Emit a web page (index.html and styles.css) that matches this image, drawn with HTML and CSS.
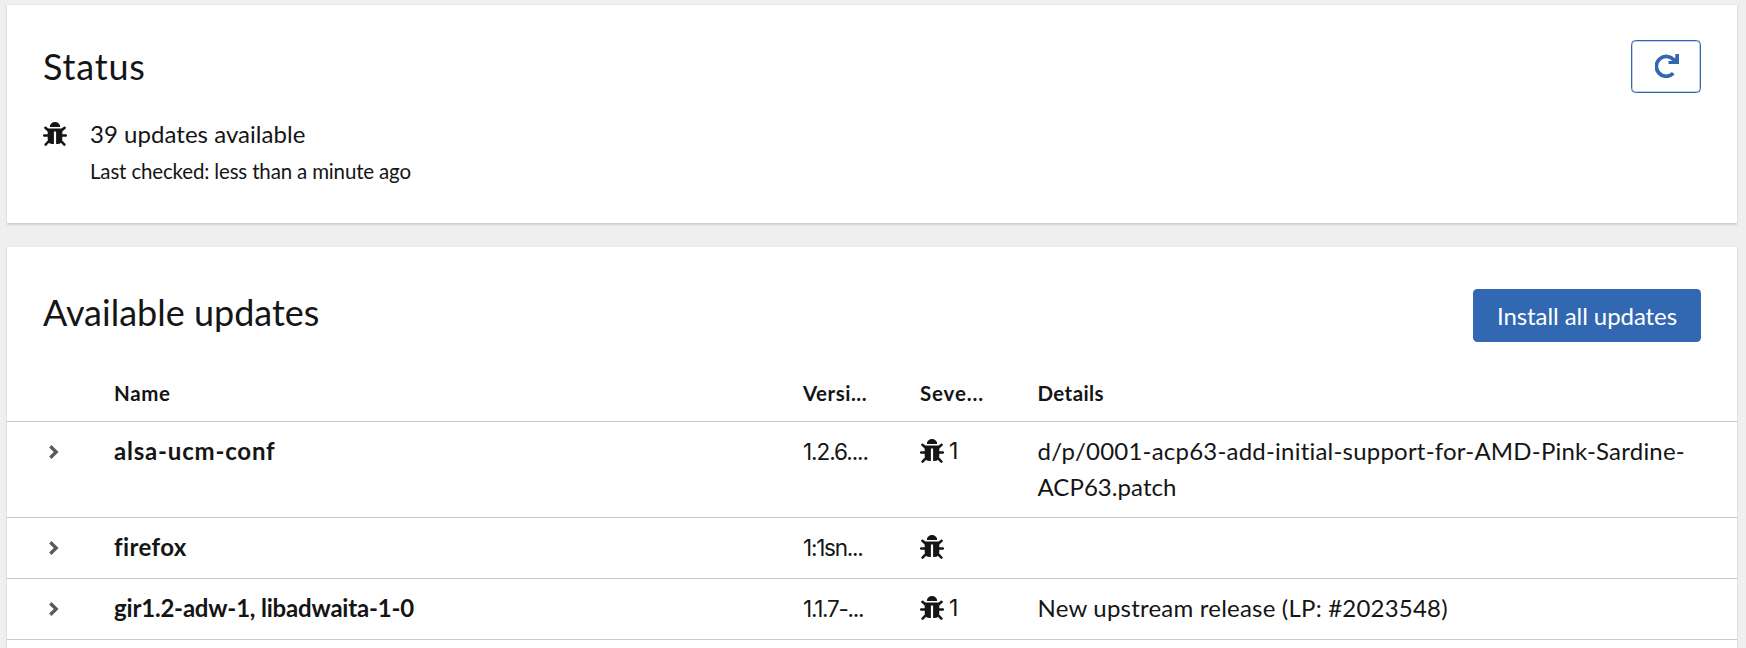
FILE: index.html
```html
<!DOCTYPE html>
<html lang="en">
<head>
<meta charset="utf-8">
<title>Software updates</title>
<link rel="stylesheet" href="styles.css">
</head>
<body>
<svg class="defs" aria-hidden="true">
  <symbol id="bug" viewBox="0 0 24 24">
    <path d="M6.800 4.900a5.200 4.800 0 0 1 10.400 0z" fill="currentColor"/>
    <path d="M4.700 6.500h14.600v10.300q0 5.200-5 5.200h-1.200V9.500h-2.200v12.500H9.700q-5 0-5-5.200z" fill="currentColor"/>
    <path d="M2.400 5.800l3.400 3M21.600 5.800l-3.400 3M1.200 13.500h5M22.800 13.500h-5M2.600 22.600l3.800-4M21.400 22.600l-3.800-4" fill="none" stroke="currentColor" stroke-width="2.500" stroke-linecap="round"/>
  </symbol>
  <symbol id="chevron" viewBox="0 0 12 16">
    <path d="M2.300 2.200L8.200 8l-5.900 5.800" fill="none" stroke="currentColor" stroke-width="3.300"/>
  </symbol>
</svg>
<main class="page">
  <section class="card status">
    <div class="status-body">
      <h2 class="title status-title">Status</h2>
      <div class="summary">
        <svg class="bug"><use href="#bug"/></svg>
        <div>
          <div class="count">39 updates available</div>
          <div class="checked">Last checked: less than a minute ago</div>
        </div>
      </div>
    </div>
    <button class="refresh" aria-label="Check for updates">
      <svg class="refresh-icon" viewBox="0 0 24 24"><path d="M18.300 19.300A9.900 9.900 0 1 1 19 6.200" fill="none" stroke="currentColor" stroke-width="3.700"/><path d="M24 0v10H13.500v-3h3.500l3.300-3.600V0z" fill="currentColor"/></svg>
    </button>
  </section>
  <section class="card updates">
    <header class="updates-head">
      <h2 class="title">Available updates</h2>
      <button class="install">Install all updates</button>
    </header>
    <div class="row head">
      <span></span><span class="h-name">Name</span><span class="h-ver">Versi...</span><span class="h-sev">Seve...</span><span class="h-det">Details</span>
    </div>
    <div class="row">
      <svg class="chevron"><use href="#chevron"/></svg>
      <span class="name wide">alsa-ucm-conf</span>
      <span class="version">1.2.6....</span>
      <span class="severity"><svg class="bug"><use href="#bug"/></svg><span class="num">1</span></span>
      <span class="details">d/p/0001-acp63-add-initial-support-for-AMD-Pink-Sardine-<br><span class="patch">ACP63.patch</span></span>
    </div>
    <div class="row">
      <svg class="chevron"><use href="#chevron"/></svg>
      <span class="name mid">firefox</span>
      <span class="version tight">1:1sn...</span>
      <span class="severity"><svg class="bug"><use href="#bug"/></svg></span>
      <span></span>
    </div>
    <div class="row">
      <svg class="chevron"><use href="#chevron"/></svg>
      <span class="name">gir1.2-adw-1, libadwaita-1-0</span>
      <span class="version tight">1.1.7-...</span>
      <span class="severity"><svg class="bug"><use href="#bug"/></svg><span class="num">1</span></span>
      <span class="details">New upstream release (LP: #2023548)</span>
    </div>
  </section>
</main>
</body>
</html>
```
FILE: styles.css
```css
* { box-sizing: border-box; }
body {
  margin: 0;
  background: #efefef;
  color: #151515;
  font: 24px/36px Lato, "Liberation Sans", sans-serif;
  font-variant-ligatures: none;
}
.defs { display: block; width: 0; height: 0; }
.page {
  height: 648px;
  overflow: hidden;
  padding: 5px 9px 0 7px;
  display: flex;
  flex-direction: column;
  gap: 24px;
}
.card {
  flex: none;
  background: #fff;
  box-shadow: 0 1.5px 2px rgba(3, 3, 3, .12), 0 0 2px rgba(3, 3, 3, .07);
}
.title {
  margin: 0;
  font-size: 36px;
  font-weight: 400;
  line-height: 48px;
}
.status-title { letter-spacing: .8px; }
.status {
  height: 218px;
  padding: 35px 36px 0;
  display: flex;
  justify-content: space-between;
  align-items: flex-start;
}
.status-body { padding-top: 2px; }
.summary { display: flex; gap: 23px; margin-top: 26px; }
.bug { flex: none; display: block; width: 24px; height: 24px; margin-top: 6px; }
.count { letter-spacing: .04px; }
.checked { font-size: 20.5px; line-height: 32px; letter-spacing: -.16px; margin-top: 3px; }
button { font-family: inherit; padding: 0; }
.refresh {
  width: 70px;
  height: 53px;
  border: 1px solid #3267b1;
  box-shadow: inset 0 0 0 1px rgba(50, 103, 177, .3);
  border-radius: 4.5px;
  background: #fff;
  color: #3267b1;
  display: flex;
  align-items: center;
  justify-content: center;
}
.refresh-icon { width: 24px; height: 24px; margin: -2px 0 0 1px; }
.updates { height: 420px; }
.updates-head {
  height: 122px;
  padding: 42px 36px 0;
  display: flex;
  justify-content: space-between;
  align-items: flex-start;
}
.updates-head .title { margin-top: -1px; }
.install {
  width: 228px;
  height: 53px;
  border: 0;
  border-radius: 4.5px;
  background: #3267b1;
  color: #fff;
  font-size: 24px;
  line-height: 53px;
  letter-spacing: -.07px;
}
.row {
  display: grid;
  grid-template-columns: 72px 689px 117px 117.5px 1fr;
  min-height: 61px;
  padding: 11px 0 12px 35px;
  border-bottom: 1px solid #c9c9c9;
  align-items: start;
}
.head {
  min-height: 0;
  height: 53px;
  padding-top: 6px;
  font-size: 20.5px;
  font-weight: 700;
}
.h-name { letter-spacing: .6px; }
.h-ver { letter-spacing: .5px; }
.h-sev { letter-spacing: .85px; }
.h-det { letter-spacing: .4px; }
.chevron { width: 12px; height: 16px; margin: 11px 0 0 6px; color: #585a5e; }
.name { font-weight: 700; letter-spacing: -.19px; }
.name.wide { letter-spacing: .8px; }
.name.mid { letter-spacing: .4px; }
.version {
  font-family: Inter, sans-serif;
  font-size: 22.5px;
  letter-spacing: -1.05px;
  padding-top: 1px;
}
.version.tight { letter-spacing: -1.25px; }
.version { line-height: 35px; }
.severity { display: flex; gap: 5px; }
.num { font-family: Inter, sans-serif; font-size: 23px; }
.details { letter-spacing: .21px; white-space: nowrap; }
.patch { letter-spacing: .05px; }
```
